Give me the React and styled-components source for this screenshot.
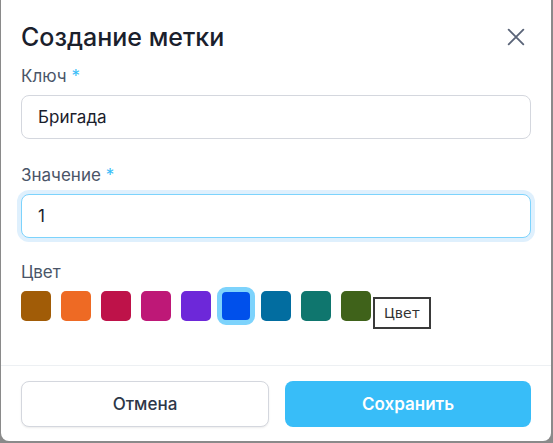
import React from 'react';
import styled, { createGlobalStyle } from 'styled-components';

const GlobalStyle = createGlobalStyle`
  html, body {
    margin: 0;
    padding: 0;
    background: #8a8a8a;
    font-family: Inter, 'Noto Sans', sans-serif;
  }
`;

const Backdrop = styled.div`
  width: 553px;
  height: 443px;
  padding-left: 1px;
  box-sizing: border-box;
  overflow: hidden;
`;

const Dialog = styled.div`
  width: 550px;
  height: 441px;
  background: #fff;
  border-radius: 0 0 8px 8px;
  display: flex;
  flex-direction: column;
  box-sizing: border-box;
`;

const Header = styled.div`
  display: flex;
  align-items: center;
  justify-content: space-between;
  padding: 21px 24px 0 20px;
  height: 32px;
`;

const Title = styled.h2`
  margin: 0;
  font-size: 25px;
  font-weight: 500;
  color: #1a202c;
  line-height: 32px;
`;

const CloseButton = styled.button`
  border: none;
  background: none;
  padding: 0;
  display: flex;
  color: #5a6478;
  cursor: pointer;
`;

const Body = styled.div`
  padding: 11px 20px 0 20px;
  flex: 1;
`;

const Field = styled.div`
  margin-bottom: ${(p) => p.$gap}px;
`;

const Label = styled.div`
  font-size: 17px;
  line-height: 24px;
  color: #4a5568;
  margin-bottom: 7px;
`;

const Star = styled.span`
  color: #38bdf8;
  margin-left: 5px;
`;

const Input = styled.input`
  display: block;
  width: 100%;
  height: 44px;
  box-sizing: border-box;
  border: 1px solid ${(p) => (p.$focused ? '#7dd3fc' : '#d4d7de')};
  box-shadow: ${(p) => (p.$focused ? '0 0 0 4px #dff0fd' : 'none')};
  border-radius: 8px;
  padding: 0 16px;
  font-family: inherit;
  font-size: 17px;
  color: #1a202c;
  outline: none;
`;

const Swatches = styled.div`
  display: flex;
  gap: 10px;
  position: relative;
`;

const Swatch = styled.div`
  width: 30px;
  height: 30px;
  border-radius: 5px;
  background: ${(p) => p.color};
  box-sizing: border-box;
  outline: ${(p) => (p.$selected ? '5px solid #7dd3fc' : 'none')};
  outline-offset: -1px;
`;

const Tooltip = styled.div`
  position: absolute;
  left: 352px;
  top: 6px;
  padding: 0 9px;
  height: 32px;
  box-sizing: border-box;
  border: 2px solid #3a3a3a;
  background: #fff;
  font-family: 'DejaVu Sans', sans-serif;
  font-size: 14px;
  color: #333;
  display: flex;
  align-items: center;
`;

const Footer = styled.div`
  border-top: 1px solid #edf0f3;
  padding: 15px 20px 14px 20px;
  display: flex;
  gap: 16px;
`;

const Button = styled.button`
  flex: 1;
  height: 46px;
  border-radius: 8px;
  font-family: inherit;
  font-size: 17px;
  cursor: pointer;
  ${(p) =>
    p.$primary
      ? `background: #38bdf8; color: #fff; border: none; font-weight: 600;`
      : `background: #fff; color: #2d3748; border: 1px solid #d4d7de; font-weight: 500; box-shadow: 0 1px 2px rgba(0,0,0,0.08);`}
`;

const colors = ['#a15c07', '#ee6a24', '#be1249', '#be1877', '#6d28d9', '#0050eb', '#026da0', '#0f766e', '#3f621a'];

export default function App() {
  return (
    <>
      <GlobalStyle />
      <Backdrop>
        <Dialog>
          <Header>
            <Title>Создание метки</Title>
            <CloseButton aria-label="close">
              <svg width="22" height="22" viewBox="0 0 24 24" fill="none" stroke="currentColor" strokeWidth="2" strokeLinecap="round">
                <path d="M4 4L20 20M20 4L4 20" />
              </svg>
            </CloseButton>
          </Header>
          <Body>
            <Field $gap={24}>
              <Label>Ключ<Star>*</Star></Label>
              <Input defaultValue="Бригада" />
            </Field>
            <Field $gap={22}>
              <Label>Значение<Star>*</Star></Label>
              <Input defaultValue="1" $focused />
            </Field>
            <Field $gap={0}>
              <Label>Цвет</Label>
              <Swatches>
                {colors.map((c, i) => (
                  <Swatch key={c} color={c} $selected={i === 5} />
                ))}
                <Tooltip>Цвет</Tooltip>
              </Swatches>
            </Field>
          </Body>
          <Footer>
            <Button>Отмена</Button>
            <Button $primary>Сохранить</Button>
          </Footer>
        </Dialog>
      </Backdrop>
    </>
  );
}
